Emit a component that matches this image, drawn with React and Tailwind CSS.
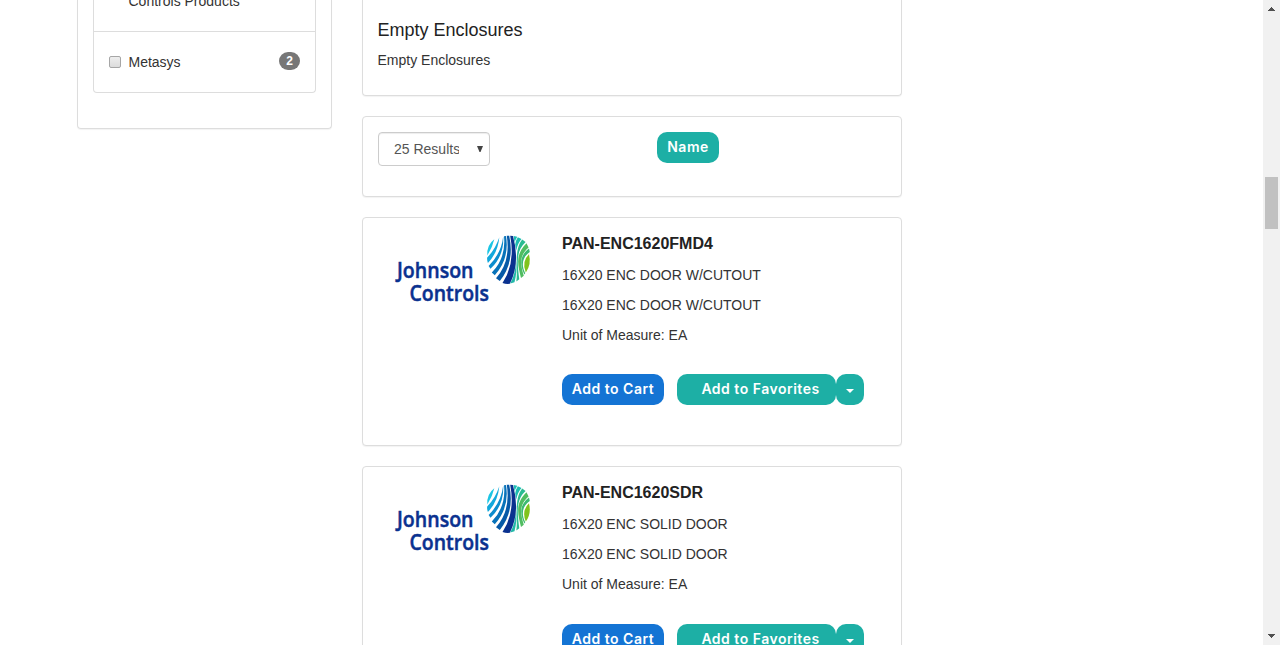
const panel = "rounded border border-[#ddd] bg-white shadow-[0_1px_1px_rgba(0,0,0,0.05)]";
const button =
  "flex h-[31px] items-center justify-center rounded-[10px] pb-px font-['Inter',sans-serif] text-[14px] leading-[20px] font-semibold tracking-[0.5px] whitespace-nowrap text-white";

const products = [
  { code: "PAN-ENC1620FMD4", description: "16X20 ENC DOOR W/CUTOUT" },
  { code: "PAN-ENC1620SDR", description: "16X20 ENC SOLID DOOR" },
];

function JohnsonControlsLogo() {
  return (
    <svg className="block h-[80px] w-[150px]" viewBox="390 230 150 80" role="img" aria-label="Johnson Controls">
      <g fill="#0a318f" stroke="#0a318f" strokeWidth="0.5" className="font-['Open_Sans',sans-serif] font-semibold">
        <text x="397" y="278" fontSize="22" textLength="76.5" lengthAdjust="spacingAndGlyphs">Johnson</text>
        <text x="409.5" y="301" fontSize="22" textLength="79.5" lengthAdjust="spacingAndGlyphs">Controls</text>
      </g>
      <path fill="#1cc5e4" d="M494.3 239.3 Q492.5 247.5 487.3 255.5 Q486.6 245 494.3 239.3Z" />
      <path fill="#12a8dc" d="M499.3 237.2 Q498 252.5 487.9 263 Q486.8 260 487.2 257.5 Q495.5 249 499.3 237.2Z" />
      <path fill="#0b8ccd" d="M503.2 236.5 Q504.3 256 490.5 268.8 L488.6 266 Q501.3 253.5 503.2 236.5Z" />
      <path fill="#0873ba" d="M506 236 Q509.8 258.5 494.8 275.3 L491.8 272.6 Q506.2 258 504 236.2Z" />
      <path fill="#0759a7" d="M509.2 235.7 Q515 262 499.8 281 L496 278.2 Q510.8 262 506.8 235.8Z" />
      <path fill="#1cbdb5" d="M513.6 236 L517.2 236.7 L514.5 242Z" />
      <path fill="#1cbdb0" d="M517.8 237.3 L521.5 239 Q517.4 243.5 516.3 250.5 L515.2 244.5 Q515.7 240.5 517.8 237.3Z" />
      <path fill="#20b8a7" d="M516.1 261 Q517.2 272 514.5 282.3 L510.2 283.5 Q515.5 274 516.1 261Z" />
      <path fill="#2abb91" d="M522.2 239.5 L525.6 242 C515.8 251 517.2 263 519.3 279.3 L516.3 281.5 C518.2 271 513.5 250 522.2 239.5Z" />
      <path fill="#50bd60" d="M526.5 243.2 L528.6 247.5 C519.4 255.5 520 263.5 523.8 275.7 L521 278 C518 265 514.6 255 526.5 243.2Z" />
      <path fill="#80c31c" d="M529 254.3 Q531.6 264.5 525.8 272.5 Q521.3 261.5 529 254.3Z" />
      <path fill="#3cba71" d="M529 248.5 L529.8 252 C521.6 257.5 521.5 266 525.2 273.3 L524.3 274.5 C519.5 264 519.8 255.5 529 248.5Z" />
      <path fill="#0a318f" d="M513 236 Q520.5 263 509.8 283.8 Q506 284.3 502.5 283 Q515.5 263.5 510.2 235.7Z" />
    </svg>
  );
}

function Product({ code, description, tall }) {
  return (
    <article className={`${panel} ${tall ? "h-[230px]" : "h-[229px]"} flex shrink-0 pt-[11px] pl-[27px]`}>
      <div className="w-[172px] shrink-0 pt-px">
        <JohnsonControlsLogo />
      </div>
      <div className="pt-[5px] text-sm leading-5">
        <h2 className="text-base leading-5 font-bold text-[#222]">{code}</h2>
        <p className="mt-[11px]">{description}</p>
        <p className="mt-2.5">{description}</p>
        <p className="mt-2.5">Unit of Measure: EA</p>
        <div className={`${tall ? "mt-[30px]" : "mt-[29px]"} flex`}>
          <button className={`${button} w-[102px] bg-[#1474d4]`}>Add to Cart</button>
          <button className={`${button} ml-[13px] w-[159px] bg-[#1dafa5] pl-2`}>Add to Favorites</button>
          <button className={`${button} w-7 bg-[#1dafa5]`} aria-label="More options">
            <svg className="mt-1 h-1 w-2" viewBox="0 0 8 4"><path d="M0 0H8L4 4Z" fill="white" /></svg>
          </button>
        </div>
      </div>
    </article>
  );
}

export default function App() {
  return (
    <div className="flex h-[645px] w-[1280px] overflow-hidden bg-white font-['Liberation_Sans',Arial,sans-serif] text-sm leading-5 text-[#333]">
      <aside className="ml-[77px] w-[255px] shrink-0">
        <div className="h-[129px] rounded-b border border-t-0 border-[#ddd] px-[15px] shadow-[0_1px_1px_rgba(0,0,0,0.05)]">
          <div className="h-[93px] overflow-hidden rounded-b border border-t-0 border-[#ddd]">
            <div className="flex h-8 items-start border-b border-[#ddd] pl-[34.5px]">
              <div className="-mt-[9px]">Controls Products</div>
            </div>
            <div className="flex h-[60px] items-center px-[15px]">
              <span className="h-3 w-3 rounded-[2px] border border-[#a6a6a6] bg-linear-to-b from-[#eee] to-[#dcdcdc]" />
              <span className="ml-[7.5px]">Metasys</span>
              <span className="-mt-0.5 ml-auto flex h-[18px] w-[21px] items-center justify-center rounded-[10px] bg-[#777] text-xs leading-3 font-bold text-white">2</span>
            </div>
          </div>
        </div>
      </aside>

      <main className="ml-[30px] flex w-[540px] shrink-0 flex-col gap-5">
        <section className="h-[96px] shrink-0 rounded-b border border-t-0 border-[#ddd] px-[14.5px] pt-5 shadow-[0_1px_1px_rgba(0,0,0,0.05)]">
          <h1 className="text-lg leading-5 text-[#222]">Empty Enclosures</h1>
          <p className="mt-2.5">Empty Enclosures</p>
        </section>
        <section className={`${panel} flex h-[81px] shrink-0 items-start px-[15px] pt-[15px]`}>
          <div className="flex h-[34px] w-28 items-center rounded border border-[#ccc] pl-[15px] text-[#555] shadow-[inset_0_1px_1px_rgba(0,0,0,0.075)]">
            <span className="w-[65px] overflow-hidden whitespace-nowrap">25 Results</span>
            <svg className="ml-[18px] h-[6px] w-[6px]" viewBox="0 0 6 6"><path d="M0 0H6L3.5 6H2.5Z" fill="#444" /></svg>
          </div>
          <button className={`${button} ml-[167px] w-[62px] bg-[#1dafa5]`}>Name</button>
        </section>
        <Product {...products[0]} />
        <Product {...products[1]} tall />
      </main>

      <div className="ml-auto flex w-[17px] shrink-0 flex-col items-center bg-[#f1f1f1]">
        <svg className="mt-[7px] mr-px h-1 w-[7px]" viewBox="0 0 7 4"><path d="M3 0h1v1h1v1h1v1h1v1H0V3h1V2h1V1h1z" fill="#505050" /></svg>
        <div className="mt-[166px] mr-[2px] ml-[1px] h-[52px] w-[13px] bg-[#c1c1c1]" />
        <svg className="mt-auto mr-px mb-[7px] h-1 w-[7px]" viewBox="0 0 7 4"><path d="M3 4h1V3h1V2h1V1h1V0H0v1h1v1h1v1h1z" fill="#505050" /></svg>
      </div>
    </div>
  );
}
